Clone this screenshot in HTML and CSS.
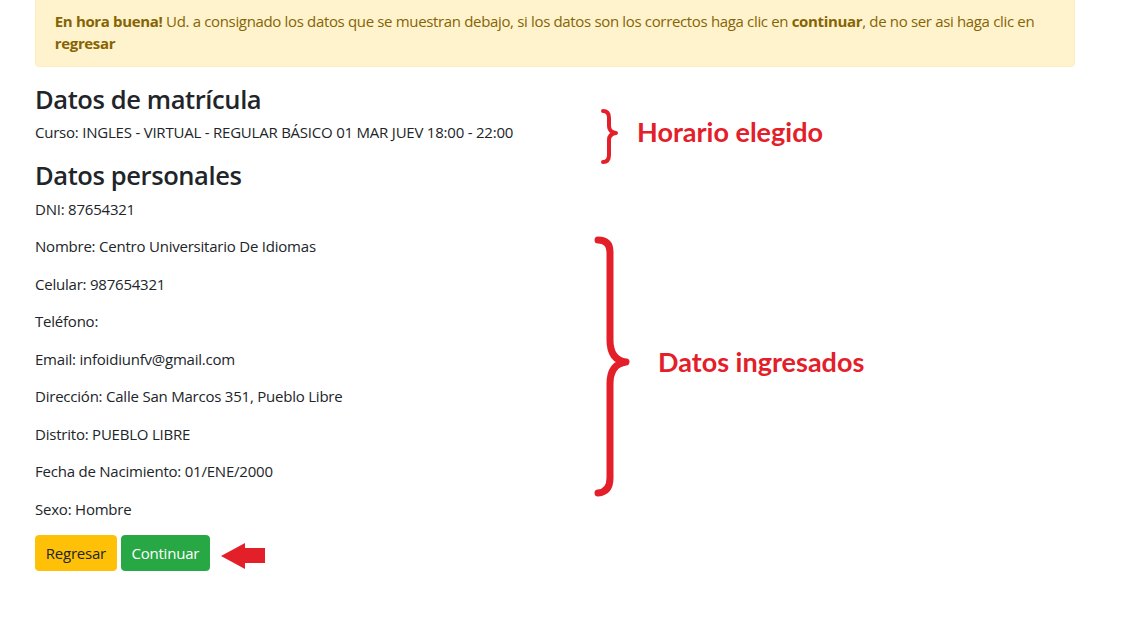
FILE: index.html
```html
<!DOCTYPE html>
<html lang="es">
<head>
<meta charset="utf-8">
<title>Confirmación de matrícula</title>
<link rel="stylesheet" href="styles.css">
</head>
<body>
<div class="page">
  <div class="alert">
    <strong>En hora buena!</strong> Ud. a consignado los datos que se muestran debajo, si los datos son los correctos haga clic en <strong>continuar</strong>, de no ser asi haga clic en <strong>regresar</strong>
  </div>

  <h3 class="title">Datos de matrícula</h3>
  <p class="item">Curso: INGLES - VIRTUAL - REGULAR BÁSICO 01 MAR JUEV 18:00 - 22:00</p>

  <h3 class="title">Datos personales</h3>
  <p class="item">DNI: 87654321</p>
  <p class="item">Nombre: Centro Universitario De Idiomas</p>
  <p class="item">Celular: 987654321</p>
  <p class="item">Teléfono:</p>
  <p class="item">Email: infoidiunfv@gmail.com</p>
  <p class="item">Dirección: Calle San Marcos 351, Pueblo Libre</p>
  <p class="item">Distrito: PUEBLO LIBRE</p>
  <p class="item">Fecha de Nacimiento: 01/ENE/2000</p>
  <p class="item">Sexo: Hombre</p>

  <div class="actions">
    <button class="btn btn-warning" type="button">Regresar</button>
    <button class="btn btn-success" type="button">Continuar</button>
  </div>
</div>

<svg class="marks" width="1133" height="629" viewBox="0 0 1133 629" aria-hidden="true">
  <path class="brace-s" d="M603 111 Q609 111 609 118 L609 126 Q609 132 616 133 Q609 134 609 140 L609 155 Q609 162 603 162"/>
  <path class="brace-l" d="M598 240 Q610 240 610 252 L610 340 Q610 360 626 362 Q610 364 610 384 L610 478 Q610 492 598 493"/>
  <path class="arrow" d="M221 556 L245 543 L245 548 L265 548 L265 563 L245 563 L245 569 Z"/>
</svg>
<div class="note note-1">Horario elegido</div>
<div class="note note-2">Datos ingresados</div>
</body>
</html>
```
FILE: styles.css
```css
html, body {
  margin: 0;
  padding: 0;
  background: #ffffff;
}
body {
  font-family: "Open Sans", "Noto Sans", "Liberation Sans", sans-serif;
  font-size: 15px;
  line-height: 22.5px;
  letter-spacing: -0.22px;
  color: #212529;
  position: relative;
  width: 1133px;
  height: 629px;
  overflow: hidden;
}
.page {
  width: 1040px;
  margin-left: 35px;
}
.alert {
  margin-top: -2.5px;
  margin-bottom: 15px;
  padding: 11.25px 18.75px;
  background: #fff3cd;
  border: 1px solid #ffeeba;
  border-radius: 3.75px;
  color: #856404;
  letter-spacing: -0.34px;
}
.alert strong {
  font-weight: 700;
}
.title {
  margin: 0 0 6px;
  padding-top: 1.5px;
  font-size: 25.5px;
  line-height: 31.5px;
  font-weight: 600;
  letter-spacing: -0.4px;
}
.item {
  margin: 0 0 15px;
}
.actions {
  display: flex;
  gap: 4px;
}
.btn {
  font-family: inherit;
  font-size: 15px;
  line-height: 22.5px;
  letter-spacing: -0.22px;
  padding: 5.6px 9.75px;
  border: 1px solid transparent;
  border-radius: 3.75px;
  cursor: pointer;
}
.btn-warning {
  background: #ffc107;
  border-color: #ffc107;
  color: #212529;
}
.btn-success {
  background: #28a745;
  border-color: #28a745;
  color: #ffffff;
}
.marks {
  position: absolute;
  left: 0;
  top: 0;
  pointer-events: none;
}
.brace-s, .brace-l {
  fill: none;
  stroke: #e3202a;
  stroke-linecap: round;
  stroke-linejoin: round;
}
.brace-s { stroke-width: 4; }
.brace-l { stroke-width: 7; }
.arrow { fill: #e3202a; }
.note {
  position: absolute;
  font-family: "Lato", "Open Sans", sans-serif;
  font-weight: 700;
  color: #e3202a;
  font-size: 27px;
  line-height: 30px;
  letter-spacing: 0;
  white-space: nowrap;
}
.note-1 { left: 637px; top: 117px; }
.note-2 { left: 658px; top: 347px; }
```
